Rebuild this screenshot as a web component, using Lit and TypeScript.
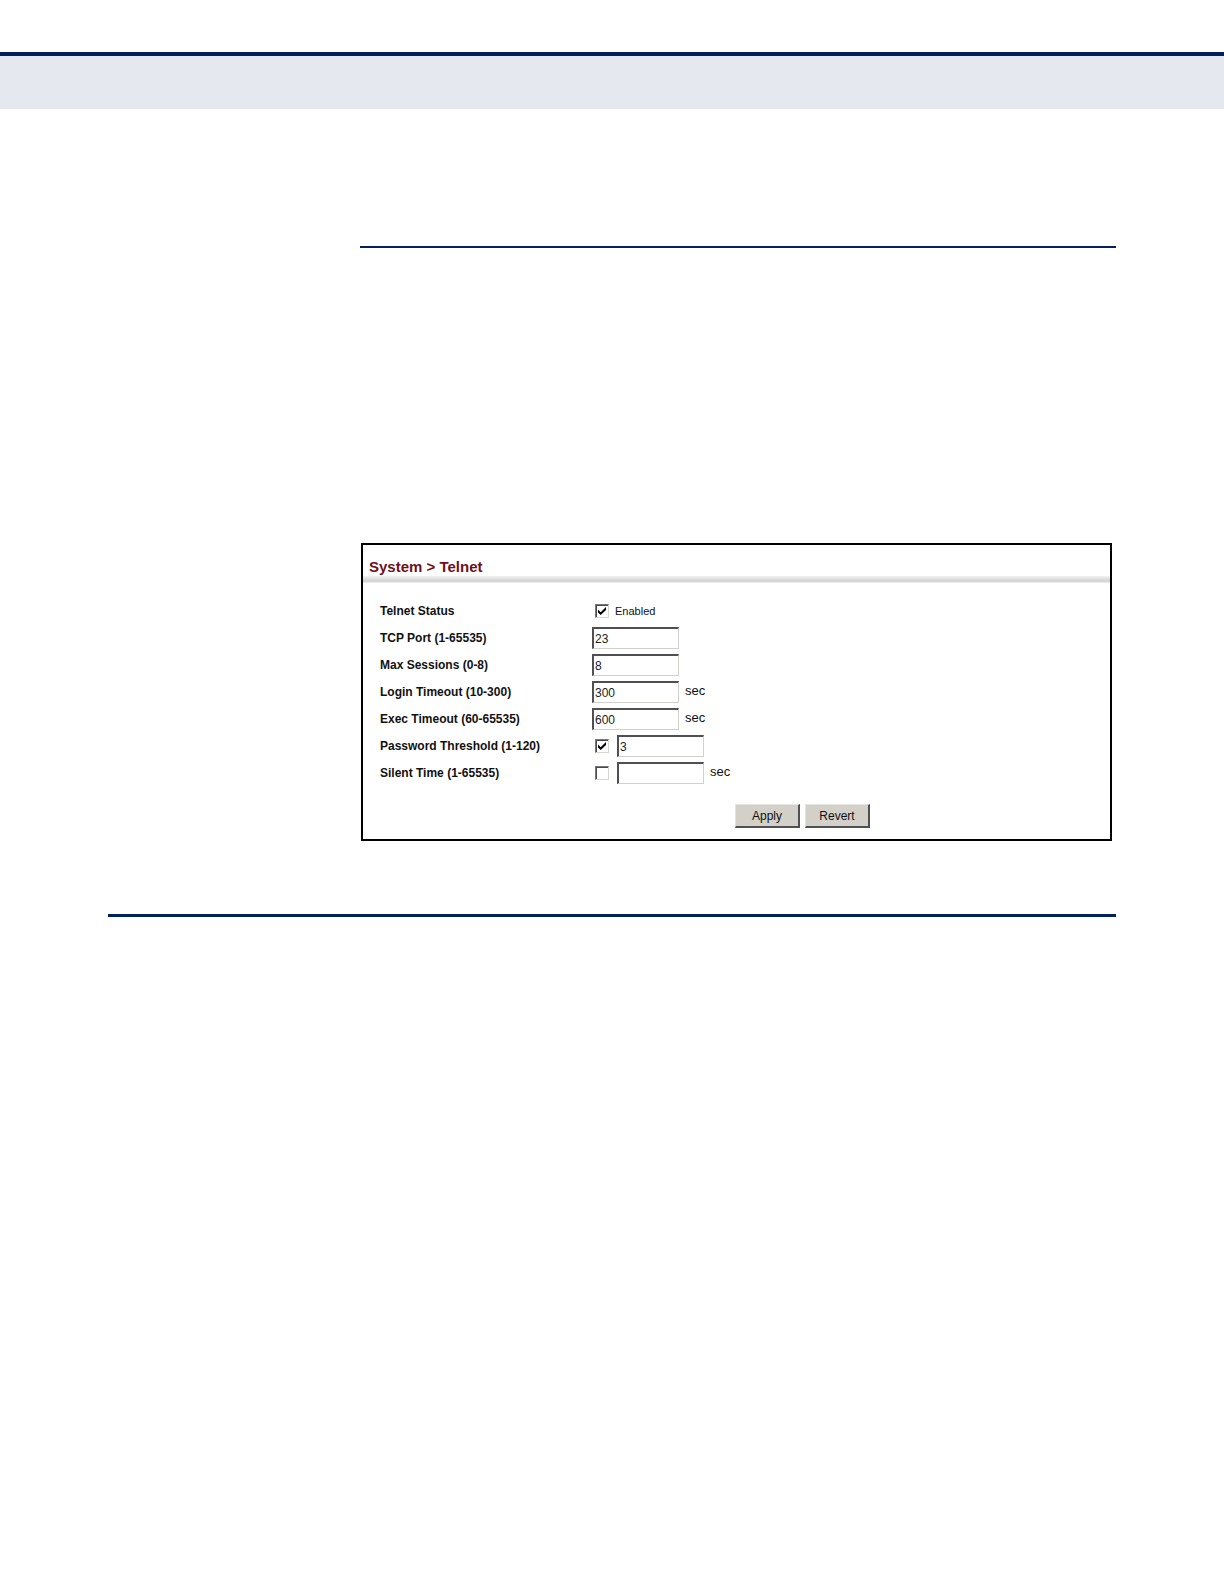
import { LitElement, html, css, nothing } from "lit";
import { customElement, state } from "lit/decorators.js";

interface Setting {
  id: string;
  label: string;
  value?: string;
  toggle?: boolean;
  caption?: string;
  unit?: string;
}

@customElement("app-root")
class AppRoot extends LitElement {
  @state() private settings: Setting[] = [
    { id: "status", label: "Telnet Status", toggle: true, caption: "Enabled" },
    { id: "port", label: "TCP Port (1-65535)", value: "23" },
    { id: "sessions", label: "Max Sessions (0-8)", value: "8" },
    { id: "login", label: "Login Timeout (10-300)", value: "300", unit: "sec" },
    { id: "exec", label: "Exec Timeout (60-65535)", value: "600", unit: "sec" },
    { id: "threshold", label: "Password Threshold (1-120)", value: "3", toggle: true },
    { id: "silent", label: "Silent Time (1-65535)", value: "", toggle: false, unit: "sec" },
  ];

  static styles = css`
    :host {
      display: block;
      background: #fff;
      color: #111;
      font-family: "Liberation Sans", Arial, sans-serif;
      font-size: 12px;
    }
    .page {
      padding-top: 52px;
    }
    .band {
      height: 53px;
      border-top: 4px solid #03215f;
      background: #e5e8ef;
    }
    .content {
      padding: 137px 108px 0;
    }
    .section {
      margin-left: 252px;
      padding-top: 295px;
      border-top: 2px solid #03215f;
    }
    .panel {
      margin: 0 4px 0 1px;
      border: 2px solid #000;
    }
    .title {
      margin: 0;
      padding: 12px 6px 0;
      color: #701018;
      font-size: 15px;
      font-weight: bold;
      line-height: 19px;
    }
    .divider {
      height: 7px;
      background: linear-gradient(#f4f4f4, #d6d6d6 60%, #d6d6d6 80%, #f4f4f4);
    }
    .rows {
      display: grid;
      gap: 5px;
      padding: 17px 17px 0;
    }
    .row {
      display: grid;
      grid-template-columns: 212px 1fr;
      align-items: center;
      height: 22px;
    }
    .name {
      font-weight: bold;
    }
    .field {
      display: flex;
      align-items: center;
    }
    .check {
      display: inline-grid;
      margin: 0 8px 0 3px;
    }
    .box,
    .tick {
      grid-area: 1 / 1;
      width: 14px;
      height: 14px;
    }
    .box {
      appearance: none;
      box-sizing: border-box;
      margin: 0;
      background: #fff;
      border: 1px solid;
      border-color: #77777a #d6d6d2 #d6d6d2 #77777a;
      box-shadow: inset 1px 1px 0 #4a4a4a;
    }
    .tick {
      visibility: hidden;
      pointer-events: none;
    }
    .box:checked + .tick {
      visibility: visible;
    }
    .caption {
      margin-left: -2px;
      font-size: 11px;
    }
    .text {
      box-sizing: border-box;
      width: 87px;
      height: 22px;
      padding: 0 1px;
      border: solid;
      border-width: 2px 1px 1px 2px;
      border-color: #505054 #d0d0cc #d0d0cc #505054;
      background: #fff;
      color: #222;
      font: inherit;
      outline: none;
    }
    .unit {
      margin-left: 6px;
      font-size: 13px;
      line-height: 14px;
      padding-bottom: 2px;
    }
    .actions {
      display: flex;
      justify-content: center;
      gap: 5px;
      padding: 20px 0 11px 132px;
    }
    .button {
      width: 65px;
      height: 24px;
      padding: 0;
      border: solid;
      border-width: 1px 2px 2px 1px;
      border-color: #e6e4de #505054 #505054 #e6e4de;
      background: #d2d0c8;
      color: #111;
      font: inherit;
    }
    .end {
      height: 3px;
      margin: 73px 0 0;
      border: 0;
      background: #03215f;
    }
  `;

  private renderRow(s: Setting) {
    const hasText = s.value !== undefined;
    const boxId = hasText ? `${s.id}-on` : s.id;
    return html`
      <div class="row">
        <label class="name" for=${s.id}>${s.label}</label>
        <div class="field">
          ${s.toggle !== undefined
            ? html`<span class="check">
                <input class="box" id=${boxId} type="checkbox" aria-label=${s.label} ?checked=${s.toggle} />
                <svg class="tick" viewBox="0 0 14 14" aria-hidden="true">
                  <path d="M3 5.5 L5.7 8.2 L11 3 V6 L5.7 11 L3 8.5 Z" />
                </svg>
              </span>`
            : nothing}
          ${hasText ? html`<input class="text" id=${s.id} type="text" value=${s.value} />` : nothing}
          ${s.caption ? html`<label class="caption" for=${boxId}>${s.caption}</label>` : nothing}
          ${s.unit ? html`<span class="unit">${s.unit}</span>` : nothing}
        </div>
      </div>
    `;
  }

  render() {
    return html`
      <div class="page">
        <header class="band"></header>
        <main class="content">
          <section class="section">
            <form class="panel" @submit=${(e: Event) => e.preventDefault()}>
              <h1 class="title">System &gt; Telnet</h1>
              <div class="divider"></div>
              <div class="rows">${this.settings.map((s) => this.renderRow(s))}</div>
              <div class="actions">
                <button class="button" type="submit">Apply</button>
                <button class="button" type="reset">Revert</button>
              </div>
            </form>
          </section>
          <hr class="end" />
        </main>
      </div>
    `;
  }
}
